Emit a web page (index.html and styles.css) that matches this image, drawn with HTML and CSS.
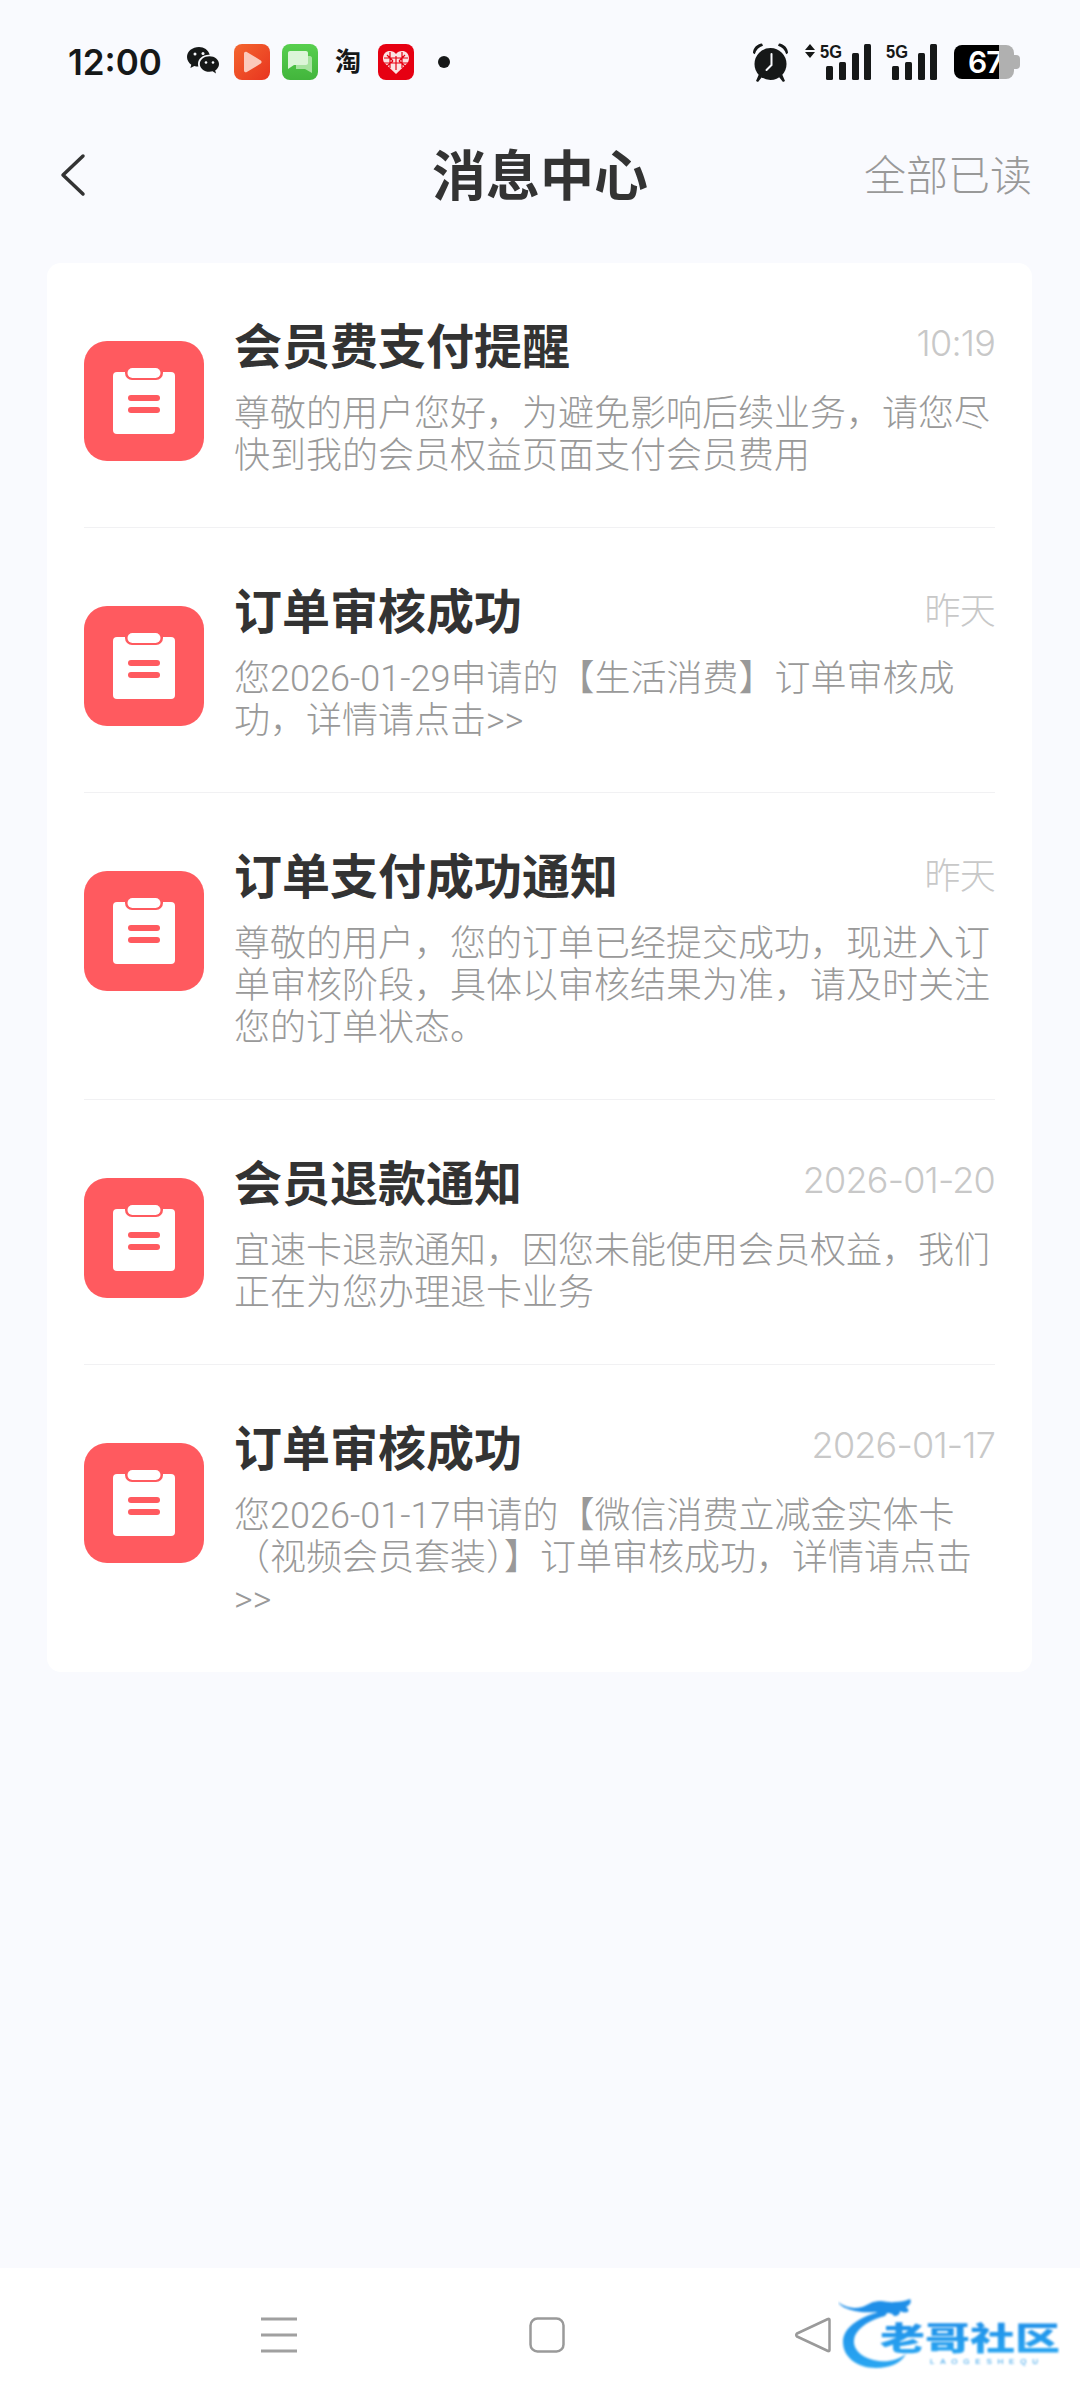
FILE: index.html
```html
<!DOCTYPE html>
<html lang="zh-CN">
<head>
    <meta charset="UTF-8">
    <meta name="viewport" content="width=device-width, initial-scale=1.0">
    <title>消息中心</title>
    <link rel="stylesheet" href="styles.css">
</head>
<body>
    <div class="page">
        <!-- status bar -->
        <div class="status-bar">
            <span class="clock">12:00</span>
            <svg class="st-wechat" width="34" height="30" viewBox="0 0 34 30">
                <path fill="#161818" d="M12 0C5.5 0 0 4.300 0 10c0 3.200 1.700 5.900 4.300 7.700L3.400 21l3.900-2c1.300.4 2.700.6 4.100.6-.3-1-.4-1.800-.4-2.700 0-5.200 4.900-9.200 10.700-9.200h1C21.400 3.100 17 0 12 0z"/>
                <path fill="#161818" d="M22.400 9.200C17 9.200 12.800 12.700 12.800 17s4.200 7.800 9.600 7.800c1.100 0 2.200-.2 3.200-.5l3.400 2.200-.8-3.100c2.400-1.500 3.800-3.800 3.800-6.400 0-4.300-4.200-7.800-9.600-7.800z"/>
                <circle cx="8" cy="7" r="1.500" fill="#f9fafe"/>
                <circle cx="16" cy="6.500" r="1.500" fill="#f9fafe"/>
                <circle cx="19" cy="15.500" r="1.300" fill="#f9fafe"/>
                <circle cx="26" cy="15.500" r="1.300" fill="#f9fafe"/>
            </svg>
            <svg class="st-play" width="36" height="36" viewBox="0 0 36 36">
                <defs>
                    <linearGradient id="playBg" x1="0" y1="0" x2="1" y2="1">
                        <stop offset="0" stop-color="#f4662f"/>
                        <stop offset="1" stop-color="#e8341f"/>
                    </linearGradient>
                </defs>
                <rect width="36" height="36" rx="8" fill="url(#playBg)"/>
                <path fill="#fbcabb" d="M10 9.500c0-1.500 1.500-2.300 2.800-1.500l14 8.500c1.100.7 1.100 2.300 0 3l-14 8.500c-1.300.8-2.800 0-2.800-1.500z"/>
            </svg>
            <svg class="st-msg" width="36" height="36" viewBox="0 0 36 36">
                <defs>
                    <linearGradient id="msgBg" x1="0" y1="0" x2="0" y2="1">
                        <stop offset="0" stop-color="#58cf4f"/>
                        <stop offset="1" stop-color="#42b53c"/>
                    </linearGradient>
                </defs>
                <rect width="36" height="36" rx="8" fill="url(#msgBg)"/>
                <path fill="#a7e3a0" d="M14 12h14c1 0 2 1 2 2v15l-7-4H14z"/>
                <path fill="#dcf5d8" d="M8 7h16c1.100 0 2 .900 2 2v10c0 1.100-.900 2-2 2H12l-6 4V9c0-1.100.900-2 2-2z"/>
            </svg>
            <span class="st-tao">淘</span>
            <svg class="st-pdd" width="36" height="36" viewBox="0 0 36 36">
                <rect width="36" height="36" rx="8" fill="#e60012"/>
                <path fill="#fbe3e3" d="M18 30 6.500 19C3.500 15 5 8 10.500 7c3.200-.5 6 .8 7.500 3 1.500-2.200 4.300-3.500 7.500-3C31 8 32.500 15 29.500 19z"/>
                <path fill="none" stroke="#e60012" stroke-width="1.200" d="M12 8v16M24 8v16M6 14h24M6 19h24M18 12v14M9 11l6 6M27 11l-6 6M9 22l6-5M27 22l-6-5"/>
            </svg>
            <span class="st-dot"></span>
            <span class="st-spacer"></span>
            <svg class="st-alarm" width="37" height="39" viewBox="0 0 37 39">
                <path fill="#161818" d="M1 10C1 5 5 1 10 .500l1 2.300C7 4 4 7 2.800 11.300zM36 10c0-5-4-9-9-9.500l-1 2.300c4 1.200 7 4.200 8.200 8.500z"/>
                <path fill="#161818" d="m7 31-3 7 2 1 4-5zM30 31l3 7-2 1-4-5z"/>
                <circle cx="18.500" cy="21" r="16" fill="#161818"/>
                <path fill="none" stroke="#f9fafe" stroke-width="2" stroke-linecap="round" d="M19.500 11v11l-5 5"/>
            </svg>
            <svg class="st-signal st-signal-a" width="66" height="36" viewBox="0 0 66 36">
                <path fill="#161818" d="m5 0 5 6H0zM5 14 0 8h10z"/>
                <text class="st-5g" x="15" y="14" textLength="22" lengthAdjust="spacingAndGlyphs">5G</text>
                <rect x="21" y="22" width="7" height="14" rx="1.500" fill="#161818"/>
                <rect x="34" y="18" width="7" height="18" rx="1.500" fill="#161818"/>
                <rect x="47" y="9" width="7" height="27" rx="1.500" fill="#161818"/>
                <rect x="59" y="0" width="7" height="36" rx="1.500" fill="#161818"/>
            </svg>
            <svg class="st-signal st-signal-b" width="51" height="36" viewBox="0 0 51 36">
                <text class="st-5g" x="0" y="14" textLength="22" lengthAdjust="spacingAndGlyphs">5G</text>
                <rect x="6" y="22" width="7" height="14" rx="1.500" fill="#161818"/>
                <rect x="19" y="18" width="7" height="18" rx="1.500" fill="#161818"/>
                <rect x="32" y="9" width="7" height="27" rx="1.500" fill="#161818"/>
                <rect x="44" y="0" width="7" height="36" rx="1.500" fill="#161818"/>
            </svg>
            <div class="battery">
                <div class="battery-fill">67</div>
                <div class="battery-rest"></div>
                <div class="battery-nub"></div>
            </div>
        </div>

        <!-- header -->
        <div class="header">
            <svg class="back" width="26" height="44" viewBox="0 0 26 44">
                <path fill="none" stroke="#333" stroke-width="3.500" stroke-linecap="round" stroke-linejoin="round" d="M23 3 3 22l20 19"/>
            </svg>
            <h1 class="header-title">消息中心</h1>
            <span class="read-all">全部已读</span>
        </div>

        <!-- message list -->
        <div class="card">
            <div class="msg">
                <svg class="msg-icon" viewBox="0 0 120 120"><use href="#clipboard"/></svg>
                <div class="msg-main">
                    <div class="msg-top"><span class="msg-title">会员费支付提醒</span><span class="msg-time">10:19</span></div>
                    <p class="msg-text">尊敬的用户您好，为避免影响后续业务，请您尽快到我的会员权益页面支付会员费用</p>
                </div>
            </div>
            <div class="msg">
                <svg class="msg-icon" viewBox="0 0 120 120"><use href="#clipboard"/></svg>
                <div class="msg-main">
                    <div class="msg-top"><span class="msg-title">订单审核成功</span><span class="msg-time">昨天</span></div>
                    <p class="msg-text">您2026-01-29申请的【生活消费】订单审核成功，详情请点击&gt;&gt;</p>
                </div>
            </div>
            <div class="msg">
                <svg class="msg-icon" viewBox="0 0 120 120"><use href="#clipboard"/></svg>
                <div class="msg-main">
                    <div class="msg-top"><span class="msg-title">订单支付成功通知</span><span class="msg-time">昨天</span></div>
                    <p class="msg-text">尊敬的用户，您的订单已经提交成功，现进入订单审核阶段，具体以审核结果为准，请及时关注您的订单状态。</p>
                </div>
            </div>
            <div class="msg">
                <svg class="msg-icon" viewBox="0 0 120 120"><use href="#clipboard"/></svg>
                <div class="msg-main">
                    <div class="msg-top"><span class="msg-title">会员退款通知</span><span class="msg-time">2026-01-20</span></div>
                    <p class="msg-text">宜速卡退款通知，因您未能使用会员权益，我们正在为您办理退卡业务</p>
                </div>
            </div>
            <div class="msg">
                <svg class="msg-icon" viewBox="0 0 120 120"><use href="#clipboard"/></svg>
                <div class="msg-main">
                    <div class="msg-top"><span class="msg-title">订单审核成功</span><span class="msg-time">2026-01-17</span></div>
                    <p class="msg-text">您2026-01-17申请的【微信消费立减金实体卡（视频会员套装）】订单审核成功，详情请点击&gt;&gt;</p>
                </div>
            </div>
        </div>

        <!-- bottom navigation -->
        <div class="nav-bar">
            <svg class="nav-menu" width="36" height="36" viewBox="0 0 36 36">
                <path stroke="#a0a0a0" stroke-width="3" d="M0 2h36M0 18h36M0 34h36"/>
            </svg>
            <svg class="nav-home" width="36" height="36" viewBox="0 0 36 36">
                <rect x="1.500" y="1.500" width="33" height="33" rx="7" fill="none" stroke="#9a9a9a" stroke-width="2.500"/>
            </svg>
            <svg class="nav-back" width="36" height="36" viewBox="0 0 36 36">
                <path fill="none" stroke="#9a9a9a" stroke-width="2.500" stroke-linejoin="round" d="M33 2 2 16.500c-1 1-1 2 0 3L33 34c1 .5 1.500 0 1.500-1V3c0-1-.5-1.500-1.500-1z"/>
            </svg>
            <svg class="logo" width="222" height="74" viewBox="0 0 222 74">
                <defs>
                    <linearGradient id="logoBlue" x1="0" y1="0" x2="0" y2="1">
                        <stop offset="0" stop-color="#1f8fe8"/>
                        <stop offset="1" stop-color="#2aa7f2"/>
                    </linearGradient>
                </defs>
                <g class="logo-soft">
                    <path fill="url(#logoBlue)" d="M40 15C20 21 5 31 5 45c0 15 14 26 33 26 14 0 25-5 30-14-8 6-17 8-27 7C26 62 15 54 16 43c1-10 12-18 27-23 4-2 1-6-3-5z"/>
                    <path fill="#1f8fe8" d="M0 5c8 6 16 7 24 5 6-2 10-6 18-6 6 0 10 2 14 1 6 0 12-1 16-3 2 3 0 6-4 8 2 1 3 3 2 5-4 1-6 0-8-1 0 3-2 5-6 5-2-3-4-3-7-3-1 3-4 4-7 4-1-2-2-3-3-5-6 0-14 1-22-1C9 12 3 10 0 5z"/>
                    <text class="logo-name" x="42" y="53" textLength="180" lengthAdjust="spacingAndGlyphs" fill="url(#logoBlue)">老哥社区</text>
                    <text class="logo-sub" x="92" y="67" textLength="108" lengthAdjust="spacing">LAOGESHEQU</text>
                </g>
            </svg>
        </div>
    </div>

    <!-- shared icon for the message rows -->
    <svg class="defs" width="0" height="0">
        <symbol id="clipboard" viewBox="0 0 120 120">
            <rect width="120" height="120" rx="23" fill="#ff5a5f"/>
            <rect x="29" y="31" width="62" height="62" rx="4" fill="#fff"/>
            <rect x="41" y="24" width="38" height="15" rx="7" fill="#ff5a5f"/>
            <rect x="43.500" y="27" width="33" height="10" rx="5" fill="#fff"/>
            <rect x="44" y="54" width="32" height="6" rx="3" fill="#ff5a5f"/>
            <rect x="44" y="66" width="32" height="6" rx="3" fill="#ff5a5f"/>
        </symbol>
    </svg>
</body>
</html>
```

FILE: styles.css
```css
* {
    box-sizing: border-box;
}
body {
    margin: 0;
    padding: 0;
    background-color: #f9fafe;
    font-family: Inter, "Noto Sans CJK SC", "Noto Sans", sans-serif;
}
.page {
    width: 1080px;
    height: 2400px;
    display: flex;
    flex-direction: column;
    overflow: hidden;
}

/* status bar */
.status-bar {
    height: 124px;
    padding: 0 60px 0 68px;
    display: flex;
    align-items: center;
    flex-shrink: 0;
}
.clock {
    font-size: 35px;
    font-weight: 600;
    color: #161818;
    width: 119px;
}
.st-wechat { margin-right: 13px; }
.st-play { margin-right: 12px; }
.st-msg { margin-right: 17px; }
.st-tao {
    width: 26px;
    margin-right: 17px;
    font-size: 26px;
    font-weight: 700;
    line-height: 36px;
    color: #161818;
}
.st-pdd { margin-right: 24px; }
.st-dot {
    width: 12px;
    height: 12px;
    border-radius: 50%;
    background: #161818;
}
.st-spacer { flex: 1; }
.st-alarm { margin-right: 16px; }
.st-signal { overflow: visible; }
.st-signal-a { margin-right: 15px; }
.st-signal-b { margin-right: 17px; }
.st-5g {
    font-family: "Liberation Sans", sans-serif;
    font-size: 19px;
    font-weight: 700;
    fill: #161818;
}
.battery {
    width: 66px;
    height: 34px;
    display: flex;
    align-items: center;
}
.battery-fill {
    width: 45px;
    height: 34px;
    padding-left: 14px;
    background: #000;
    border-radius: 8px 0 0 8px;
    font-size: 30px;
    font-weight: 600;
    line-height: 34px;
    letter-spacing: -1px;
    color: #fff;
    white-space: nowrap;
}
.battery-rest {
    width: 15px;
    height: 34px;
    background: #b0b0b0;
    border-radius: 0 8px 8px 0;
}
.battery-nub {
    width: 6px;
    height: 14px;
    background: #b0b0b0;
    border-radius: 0 4px 4px 0;
}

/* header */
.header {
    height: 102px;
    padding: 0 48px;
    display: grid;
    grid-template-columns: 1fr auto 1fr;
    align-items: center;
    flex-shrink: 0;
}
.back {
    margin-left: 12px;
}
.header-title {
    margin: 0 0 6px;
    font-size: 54px;
    font-weight: 700;
    color: #333;
}
.read-all {
    justify-self: end;
    margin-bottom: 6px;
    font-size: 42px;
    font-weight: 300;
    color: #999;
}

/* message list */
.card {
    width: 985px;
    margin: 37px 0 0 47px;
    padding: 0 37px;
    background: #fff;
    border-radius: 14px;
    flex-shrink: 0;
}
.msg {
    display: flex;
    align-items: flex-start;
    padding: 50px 0;
    border-bottom: 1px solid #f1f1f3;
}
.msg:last-child {
    border-bottom: none;
    padding-bottom: 51px;
}
.msg-icon {
    width: 120px;
    height: 120px;
    margin: 28px 30px 0 0;
    flex-shrink: 0;
}
.msg-main {
    flex: 1;
    min-width: 0;
}
.msg-top {
    height: 60px;
    display: flex;
    align-items: center;
    justify-content: space-between;
    margin-bottom: 20px;
}
.msg-title {
    font-size: 48px;
    font-weight: 700;
    color: #333;
}
.msg-time {
    font-size: 36px;
    font-weight: 300;
    letter-spacing: -0.800px;
    color: #c8c8c8;
}
.msg-text {
    margin: 0;
    font-family: Roboto, "Noto Sans CJK SC", sans-serif;
    font-size: 36px;
    font-weight: 300;
    line-height: 42px;
    color: #999;
}

/* bottom navigation */
.nav-bar {
    margin-top: auto;
    height: 132px;
    padding: 49px 20px 0 261px;
    display: flex;
    align-items: flex-start;
    background: #fff;
    flex-shrink: 0;
    position: relative;
}
.nav-home {
    margin-left: 232px;
}
.nav-back {
    margin-left: 230px;
}
.logo {
    position: absolute;
    left: 838px;
    top: 29px;
}
.logo-soft {
    filter: blur(0.8px);
}
.logo-name {
    font-size: 32px;
    font-weight: 900;
}
.logo-sub {
    font-family: "Liberation Sans", sans-serif;
    font-size: 8px;
    fill: #2a9be8;
}
.defs {
    position: absolute;
}
```
